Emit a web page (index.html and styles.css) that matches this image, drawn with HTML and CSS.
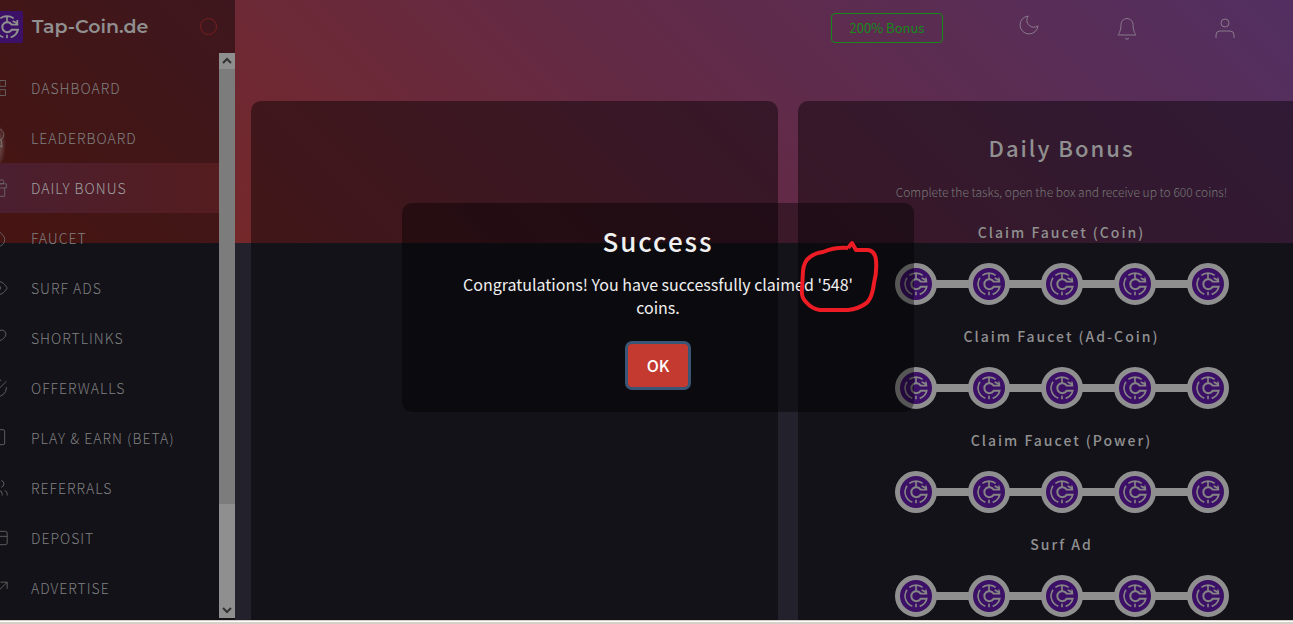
FILE: index.html
```html
<!DOCTYPE html>
<html lang="en">
<head>
<meta charset="utf-8">
<title>Tap-Coin.de – Daily Bonus</title>
<link rel="stylesheet" href="styles.css">
</head>
<body>
<svg class="defs" aria-hidden="true">
  <symbol id="coin" viewBox="-36 -36 72 72">
    <g fill="none" stroke="currentColor" stroke-width="5">
      <path d="M-20-26A33 33 0 0 1 20-26M0-32V-14"/>
      <path d="M-27-19A33 33 0 0 0-11 31"/>
      <path d="M14-7A15 15 0 1 0 14 8H33A33 33 0 0 1 11 31" stroke-width="6"/>
      <path d="M12-7H34M17-18L31-11V-21"/>
      <path d="M0 23V34"/>
    </g>
  </symbol>
</svg>
<div class="app">
  <aside class="sidebar">
    <div class="brand">
      <svg class="brand-logo"><use href="#coin"/></svg>
      <span class="brand-name">Tap-Coin.de</span>
      <span class="brand-toggle"></span>
    </div>
    <div class="side-body">
      <nav class="nav">
        <a class="nav-item" href="#"><svg class="icon" viewBox="0 0 24 24"><path d="M3 3h7v7H3zM14 3h7v7h-7zM14 14h7v7h-7zM3 14h7v7H3z"/></svg>DASHBOARD</a>
        <a class="nav-item glow" href="#"><svg class="icon" viewBox="0 0 24 24"><circle cx="12" cy="8" r="7"/><path d="M8.2 13.9L7 23l5-3 5 3-1.200-9.100"/></svg>LEADERBOARD</a>
        <a class="nav-item active" href="#"><svg class="icon" viewBox="0 0 24 24"><path d="M20 12v10H4V12M2 7h20v5H2zM12 22V7M12 7H7.500a2.500 2.500 0 0 1 0-5C11 2 12 7 12 7zM12 7h4.500a2.500 2.500 0 0 0 0-5C13 2 12 7 12 7z"/></svg>DAILY BONUS</a>
        <a class="nav-item" href="#"><svg class="icon" viewBox="0 0 24 24"><path d="M12 2.700l5.700 5.700a8 8 0 1 1-11.300 0z"/></svg>FAUCET</a>
        <a class="nav-item" href="#"><svg class="icon" viewBox="0 0 24 24"><path d="M1 12s4-8 11-8 11 8 11 8-4 8-11 8-11-8-11-8z"/><circle cx="12" cy="12" r="3"/></svg>SURF ADS</a>
        <a class="nav-item" href="#"><svg class="icon" viewBox="0 0 24 24"><path d="M10 13a5 5 0 0 0 7.500.5l3-3a5 5 0 0 0-7-7l-1.700 1.700M14 11a5 5 0 0 0-7.500-.5l-3 3a5 5 0 0 0 7 7l1.700-1.700"/></svg>SHORTLINKS</a>
        <a class="nav-item" href="#"><svg class="icon" viewBox="0 0 24 24"><path d="M22 11v1a10 10 0 1 1-6-9.100M22 4L12 14l-3-3"/></svg>OFFERWALLS</a>
        <a class="nav-item" href="#"><svg class="icon" viewBox="0 0 24 24"><rect x="5" y="2" width="15" height="18" rx="2"/></svg>PLAY &amp; EARN (BETA)</a>
        <a class="nav-item" href="#"><svg class="icon" viewBox="0 0 24 24"><path d="M17 21v-2a4 4 0 0 0-4-4H5a4 4 0 0 0-4 4v2M23 21v-2a4 4 0 0 0-3-3.900M16 3.100a4 4 0 0 1 0 7.800"/><circle cx="9" cy="7" r="4"/></svg>REFERRALS</a>
        <a class="nav-item" href="#"><svg class="icon" viewBox="0 0 24 24"><rect x="1" y="4" width="22" height="16" rx="2"/><path d="M1 10h22"/></svg>DEPOSIT</a>
        <a class="nav-item" href="#"><svg class="icon" viewBox="0 0 24 24"><path d="M23 5L13.500 14.500l-5-5L1 17M15 5h8v8"/></svg>ADVERTISE</a>
      </nav>
      <div class="scrollbar" aria-hidden="true">
        <svg class="scroll-arrow" viewBox="0 0 16 16"><path d="M4 10l4-4 4 4"/></svg>
        <div class="scroll-thumb"></div>
        <svg class="scroll-arrow" viewBox="0 0 16 16"><path d="M4 6l4 4 4-4"/></svg>
      </div>
    </div>
  </aside>
  <main class="main">
    <header class="topbar">
      <button class="bonus" type="button">200% Bonus</button>
      <svg class="top-icon moon" viewBox="0 0 24 24"><path d="M21 12.800A9 9 0 1 1 11.200 3 7 7 0 0 0 21 12.800z"/></svg>
      <svg class="top-icon" viewBox="0 0 24 24"><path d="M18 8.500a6 6 0 0 0-12 0c0 7-3 10.500-3 10.500h18s-3-3.500-3-10.500M10 22a2.300 2.300 0 0 0 4 0"/></svg>
      <svg class="top-icon" viewBox="0 0 24 24"><circle cx="12" cy="7" r="4"/><path d="M3 22v-3a4 4 0 0 1 4-4h10a4 4 0 0 1 4 4v3"/></svg>
    </header>
    <div class="cards">
      <section class="card"></section>
      <section class="card">
        <h1 class="card-title">Daily Bonus</h1>
        <p class="card-text">Complete the tasks, open the box and receive up to 600 coins!</p>
        <h2 class="task">Claim Faucet (Coin)</h2>
        <div class="steps"><svg class="coin"><use href="#coin"/></svg><i></i><svg class="coin"><use href="#coin"/></svg><i></i><svg class="coin"><use href="#coin"/></svg><i></i><svg class="coin"><use href="#coin"/></svg><i></i><svg class="coin"><use href="#coin"/></svg></div>
        <h2 class="task">Claim Faucet (Ad-Coin)</h2>
        <div class="steps"><svg class="coin"><use href="#coin"/></svg><i></i><svg class="coin"><use href="#coin"/></svg><i></i><svg class="coin"><use href="#coin"/></svg><i></i><svg class="coin"><use href="#coin"/></svg><i></i><svg class="coin"><use href="#coin"/></svg></div>
        <h2 class="task">Claim Faucet (Power)</h2>
        <div class="steps"><svg class="coin"><use href="#coin"/></svg><i></i><svg class="coin"><use href="#coin"/></svg><i></i><svg class="coin"><use href="#coin"/></svg><i></i><svg class="coin"><use href="#coin"/></svg><i></i><svg class="coin"><use href="#coin"/></svg></div>
        <h2 class="task">Surf Ad</h2>
        <div class="steps"><svg class="coin"><use href="#coin"/></svg><i></i><svg class="coin"><use href="#coin"/></svg><i></i><svg class="coin"><use href="#coin"/></svg><i></i><svg class="coin"><use href="#coin"/></svg><i></i><svg class="coin"><use href="#coin"/></svg></div>
      </section>
    </div>
  </main>
</div>
<div class="window-edge"></div>
<div class="overlay">
  <div class="modal" role="dialog" aria-labelledby="modal-title">
    <h2 class="modal-title" id="modal-title">Success</h2>
    <p class="modal-text">Congratulations! You have successfully claimed '548' coins.</p>
    <button class="ok" type="button">OK</button>
    <svg class="scribble" viewBox="798 238 82 76"><path d="M848 247L852 242L856 249H868Q875 250 876 259Q877 271 874 282Q872 299 865 303Q858 308 848 309H820Q812 308 806 301Q801 296 802 289L803 270Q804 260 810 256Q815 252 823 251Q835 246 848 247"/></svg>
  </div>
</div>
</body>
</html>
```
FILE: styles.css
```css
* { box-sizing: border-box; }
body {
  margin: 0;
  height: 100vh;
  overflow: hidden;
  display: flex;
  flex-direction: column;
  background: #22212c;
  font-family: "Noto Sans CJK SC", "Noto Sans", sans-serif;
  color: #909090;
}
h1, h2, p { margin: 0; }
.defs { position: absolute; width: 0; height: 0; }
.app {
  flex: 1;
  min-height: 0;
  display: flex;
  overflow: hidden;
  background: linear-gradient(45deg, #7c2420 0%, #74282a 16%, #632a45 52%, #522f61 100%) no-repeat 0 0 / 100% 243px;
}
.window-edge {
  height: 4px;
  flex: none;
  background: #d4d0c8;
  border-top: 1px solid #d4d0c8;
  box-shadow: inset 0 1px #fff;
}

.sidebar {
  width: 235px;
  flex: none;
  display: flex;
  flex-direction: column;
  background: rgba(0, 0, 0, .43);
}
.brand {
  height: 53px;
  flex: none;
  display: flex;
  align-items: center;
  padding-right: 18px;
}
.brand-logo {
  width: 32px;
  height: 32px;
  margin-left: -9px;
  margin-right: 9px;
  padding: 4px;
  border-radius: 2px;
  background: #3c1066;
  color: #909090;
}
.brand-name {
  font: 600 19px/24px Montserrat, Inter, sans-serif;
}
.brand-toggle {
  width: 17px;
  height: 17px;
  margin-left: auto;
  border: 1px solid #7a201d;
  border-radius: 50%;
}
.side-body {
  flex: 1;
  min-height: 0;
  display: flex;
  padding-bottom: 2px;
}
.nav { flex: 1; padding-top: 10px; overflow: hidden; }
.nav-item {
  position: relative;
  display: flex;
  align-items: center;
  height: 50px;
  gap: 23px;
  font-size: 14px;
  font-weight: 300;
  letter-spacing: 1px;
  white-space: nowrap;
  color: #808080;
  text-decoration: none;
}
.nav-item.active {
  color: #a0a0a0;
  background: linear-gradient(90deg, #4b1f30, #551d1f);
}
.nav-item.glow::before {
  content: "";
  position: absolute;
  left: -20px;
  top: 8px;
  width: 26px;
  height: 50px;
  background: radial-gradient(closest-side, rgba(200, 200, 200, .6), rgba(200, 200, 200, 0));
}
.icon {
  width: 20px;
  height: 20px;
  margin-left: -12px;
  fill: none;
  stroke: #6c6c6c;
  stroke-width: 1;
}
.scrollbar {
  width: 16px;
  display: flex;
  flex-direction: column;
  background: #8f8f8f;
}
.scroll-arrow {
  width: 16px;
  height: 16px;
  flex: none;
  fill: none;
  stroke: #333;
  stroke-width: 2;
}
.scroll-thumb { height: 77%; background: #7c7c7c; }
.scroll-arrow:last-child { margin-top: auto; }

.main { flex: 1; min-width: 0; display: flex; flex-direction: column; }
.topbar {
  height: 101px;
  flex: none;
  display: flex;
  justify-content: flex-end;
  align-items: flex-start;
  gap: 74px;
  padding: 13px 56px 0 0;
}
.bonus {
  width: 112px;
  height: 30px;
  padding: 0;
  border: 1px solid #158a1a;
  border-radius: 4px;
  background: none;
  color: #158a1a;
  font: 13px/20px "Noto Sans CJK SC", sans-serif;
}
.top-icon {
  width: 24px;
  height: 24px;
  margin-top: 3px;
  fill: none;
  stroke: #8a788c;
  stroke-width: 1;
}
.top-icon.moon { margin-top: 0; }
.cards {
  flex: 1;
  min-height: 0;
  display: grid;
  grid-template-columns: 1fr 1fr;
  gap: 20px;
  margin-right: -32px;
  padding-left: 16px;
}
.card {
  min-height: 0;
  overflow: hidden;
  border-radius: 10px 10px 0 0;
  background: rgba(0, 0, 0, .43);
  text-align: center;
}
.card-title {
  padding-top: 30px;
  font-size: 22px;
  line-height: 32px;
  font-weight: 500;
  letter-spacing: 2px;
}
.card-text {
  padding: 19px 0 16px;
  font-size: 12px;
  line-height: 20px;
  font-weight: 300;
  color: #777;
}
.task {
  margin: 2px 0 19px;
  font-size: 14px;
  line-height: 24px;
  font-weight: 500;
  letter-spacing: 2px;
}
.steps {
  display: flex;
  justify-content: center;
  align-items: center;
  margin-bottom: 19px;
}
.steps i { width: 33px; height: 8px; margin: 0 -1px; background: #8f8f8f; }
.coin {
  width: 42px;
  height: 42px;
  padding: 4px;
  border: 5px solid #8f8f8f;
  border-radius: 50%;
  background: #3c1066;
  color: #858585;
}

.overlay {
  position: absolute;
  inset: 0 -23px 10px 0;
  display: flex;
  align-items: center;
  justify-content: center;
}
.modal {
  position: relative;
  width: 512px;
  display: flex;
  flex-direction: column;
  align-items: center;
  padding: 18px 40px 25px;
  border-radius: 10px;
  background: rgba(0, 0, 0, .4);
  color: #f0f0f0;
  text-align: center;
}
.modal-title {
  font-size: 26px;
  line-height: 40px;
  font-weight: 500;
  letter-spacing: 2px;
}
.modal-text {
  padding: 12px 0 25px;
  font-size: 16px;
  line-height: 23px;
}
.ok {
  width: 60px;
  height: 43px;
  padding: 0;
  border: 0;
  border-radius: 4px;
  background: #c43a31;
  box-shadow: 0 0 0 3px #3a5676;
  color: #fff;
  font: 500 16px/24px "Noto Sans CJK SC", sans-serif;
}
.scribble {
  position: absolute;
  left: 396px;
  top: 36px;
  width: 82px;
  height: 76px;
  fill: none;
  stroke: #ed1c24;
  stroke-width: 4;
  stroke-linejoin: round;
}
```
